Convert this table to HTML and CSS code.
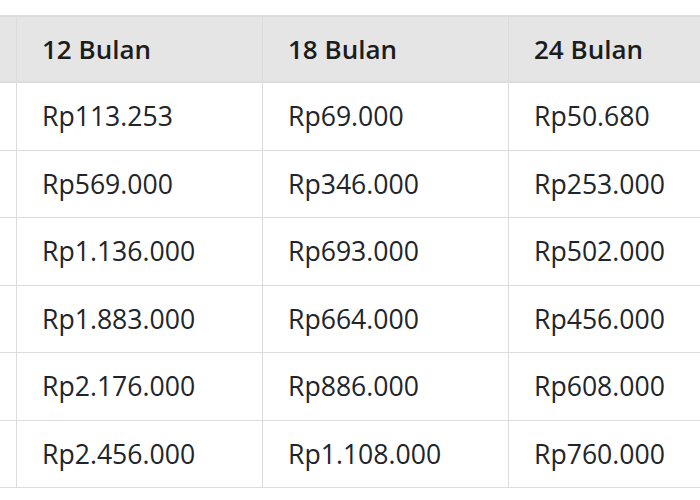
FILE: index.html
```html
<!DOCTYPE html>
<html lang="id">
<head>
<meta charset="utf-8">
<link rel="stylesheet" href="styles.css">
</head>
<body>
<div class="viewport">
  <table class="price-table">
    <thead>
      <tr>
        <th class="stub"></th>
        <th>12 Bulan</th>
        <th>18 Bulan</th>
        <th>24 Bulan</th>
      </tr>
    </thead>
    <tbody>
      <tr><td class="stub"></td><td>Rp113.253</td><td>Rp69.000</td><td>Rp50.680</td></tr>
      <tr><td class="stub"></td><td>Rp569.000</td><td>Rp346.000</td><td>Rp253.000</td></tr>
      <tr><td class="stub"></td><td>Rp1.136.000</td><td>Rp693.000</td><td>Rp502.000</td></tr>
      <tr><td class="stub"></td><td>Rp1.883.000</td><td>Rp664.000</td><td>Rp456.000</td></tr>
      <tr><td class="stub"></td><td>Rp2.176.000</td><td>Rp886.000</td><td>Rp608.000</td></tr>
      <tr><td class="stub"></td><td>Rp2.456.000</td><td>Rp1.108.000</td><td>Rp760.000</td></tr>
    </tbody>
  </table>
</div>
</body>
</html>
```

FILE: styles.css
```css
html, body {
  margin: 0;
  padding: 0;
  background: #ffffff;
}

.viewport {
  width: 700px;
  height: 500px;
  overflow: hidden;
  padding-top: 15px;
  box-sizing: border-box;
}

.price-table {
  border-collapse: collapse;
  table-layout: fixed;
  width: 754px;
  font-family: "Open Sans", "Noto Sans", sans-serif;
  font-size: 26px;
  color: #212529;
}

.price-table th,
.price-table td {
  border: 1px solid #dcdcdc;
  text-align: left;
  padding: 0 0 0 25px;
  width: 220px;
  height: 67px;
  vertical-align: middle;
  white-space: nowrap;
}

.price-table td {
  font-size: 26.6px;
  padding-bottom: 1px;
}

.price-table th {
  background: #e5e5e5;
  font-weight: 600;
  color: #1c1c1c;
  height: 64px;
  border-top-width: 2px;
  border-bottom-width: 2px;
}

.price-table tbody tr:nth-child(odd) td {
  height: 66px;
}

.price-table tbody tr:nth-child(even) td {
  height: 65px;
}

.price-table .stub {
  width: 16px;
  padding: 0;
  border-left: none;
}
```
